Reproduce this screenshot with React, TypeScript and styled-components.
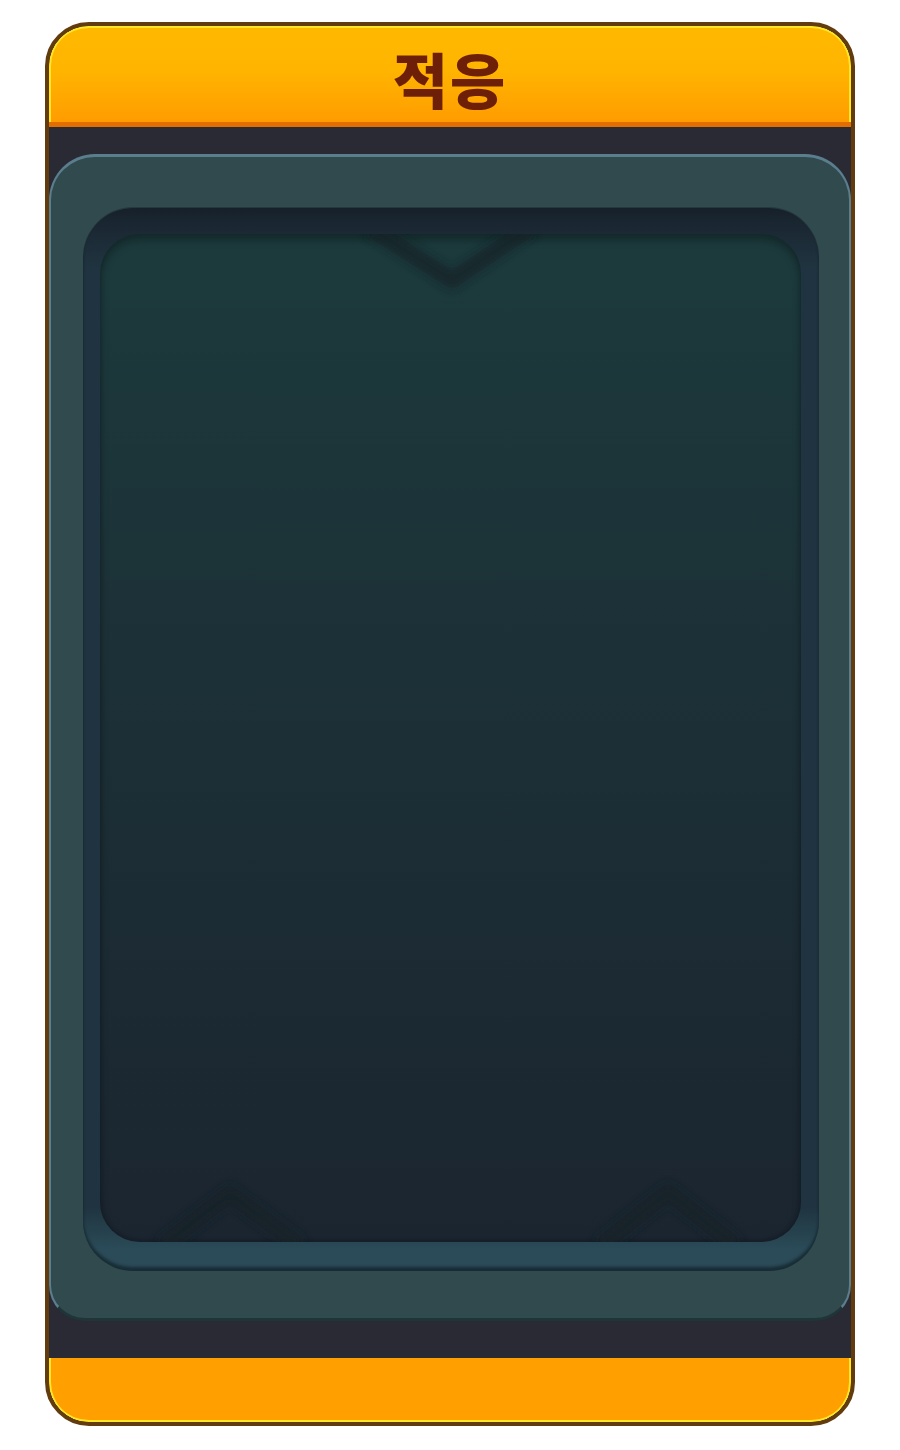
import React from 'react';
import styled, { createGlobalStyle } from 'styled-components';

const Global = createGlobalStyle`
  body {
    margin: 0;
    background: #ffffff;
    font-family: "Noto Sans", "Noto Sans CJK KR", sans-serif;
  }
`

const Page = styled.div`
  padding: 22px 0 0 45px;
`

const Card = styled.div`
  width: 810px;
  box-sizing: border-box;
  border: 4px solid #623c0e;
  border-radius: 44px;
  overflow: hidden;
  background: #2a2a34;
  display: flex;
  flex-direction: column;
`

const Header = styled.div`
  height: 96px;
  border-radius: 40px 40px 0 0;
  background: linear-gradient(#ffb800 0%, #ffb500 45%, #ff9c00 100%);
  box-shadow: inset 0 2px 0 #ffe626, inset 2px 0 0 #ffe626, inset -2px 0 0 #ffe626;
  border-bottom: 5px solid #e36e00;
  display: flex;
  align-items: center;
  justify-content: center;
`

const Title = styled.h1`
  margin: 8px 0 0;
  font-family: "Noto Sans CJK KR", sans-serif;
  font-weight: 900;
  font-size: 60px;
  line-height: 1;
  letter-spacing: 2px;
  color: #6e1f08;
`

const Body = styled.div`
  padding: 27px 0 37px;
`

const Panel = styled.div`
  height: 1167px;
  box-sizing: border-box;
  background: #304a4e;
  border-radius: 46px 46px 36px 36px;
  border-top: 3px solid #5b7e8e;
  border-left: 2px solid #5b7e8e;
  border-right: 2px solid #5b7e8e;
  border-bottom: 3px solid #1f3537;
  padding: 51px 30px 47px 32px;
  display: flex;
`

const Frame = styled.div`
  flex: 1;
  border-radius: 50px;
  background: linear-gradient(#16202a 0px, #1b2833 20px, #1f3440 60px, #1f3440 94%, #2b4b58 98%, #2b4b58 100%);
  box-shadow: inset 0 -4px 3px rgba(10, 20, 25, 0.55), 0 -1px 0 #26393f;
  padding: 26px 18px 29px 17px;
  display: flex;
`

const Screen = styled.div`
  position: relative;
  flex: 1;
  border-radius: 40px;
  overflow: hidden;
  background: linear-gradient(#1c3a3c 0%, #1c2f36 50%, #1b2530 100%);
  box-shadow: inset 0 6px 8px rgba(0, 0, 0, 0.3), inset 0 -2px 4px rgba(0, 0, 0, 0.2);
`

const Marks = styled.svg`
  position: absolute;
  left: 0;
  top: 0;
`

const Footer = styled.div`
  height: 64px;
  border-radius: 0 0 40px 40px;
  background: #ff9f00;
  box-shadow: inset 0 -2px 0 #ffe626, inset 2px 0 0 #ffe626, inset -2px 0 0 #ffe626;
`

function App() {
  return (
    <Page>
      <Global />
      <Card>
        <Header>
          <Title>적응</Title>
        </Header>
        <Body>
          <Panel>
            <Frame>
              <Screen>
                <Marks width="700" height="1008" viewBox="0 0 700 1008">
                  <defs>
                    <filter id="soft" x="-20%" y="-20%" width="140%" height="140%">
                      <feGaussianBlur stdDeviation="4.5" />
                    </filter>
                  </defs>
                  <g fill="none" stroke="#132227" strokeWidth="17" strokeLinejoin="round" opacity="0.75" filter="url(#soft)">
                    <polyline points="270,-6 352,46 430,-6" />
                    <polyline points="62,1012 130,960 200,1012" />
                    <polyline points="500,1012 568,958 636,1012" />
                  </g>
                </Marks>
              </Screen>
            </Frame>
          </Panel>
        </Body>
        <Footer />
      </Card>
    </Page>
  );
}

export default App;
